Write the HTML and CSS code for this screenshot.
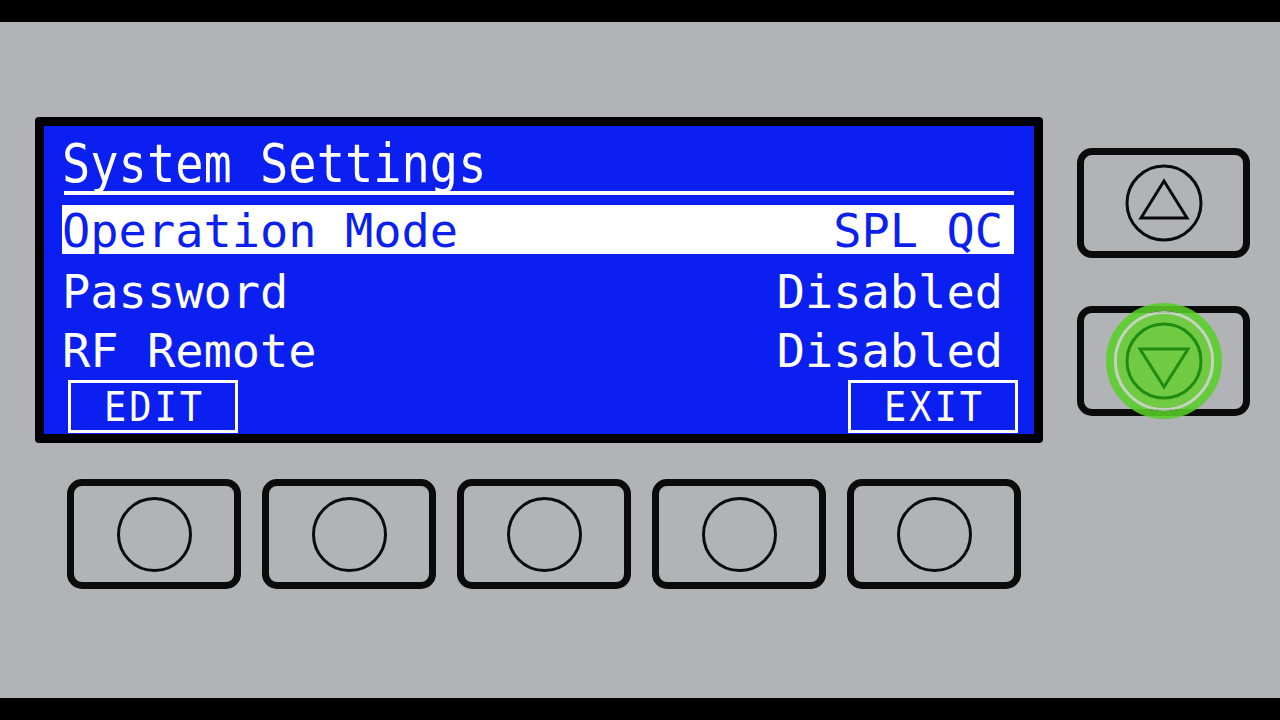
FILE: index.html
```html
<!DOCTYPE html>
<html lang="en">
<head>
  <meta charset="UTF-8">
  <meta name="viewport" content="width=device-width, initial-scale=1.0">
  <title>System Settings</title>
  <link rel="stylesheet" href="styles.css">
</head>
<body>
  <div class="panel">
    <div class="main">
      <div class="screen">
        <div class="title"><span class="lcd tall">System Settings</span></div>
        <div class="rule"></div>
        <div class="row selected">
          <span class="lcd">Operation Mode</span>
          <span class="lcd">SPL QC</span>
        </div>
        <div class="row">
          <span class="lcd">Password</span>
          <span class="lcd">Disabled</span>
        </div>
        <div class="row">
          <span class="lcd">RF Remote</span>
          <span class="lcd">Disabled</span>
        </div>
        <div class="softkeys">
          <div class="softkey"><span class="lcd tall">EDIT</span></div>
          <div class="softkey"><span class="lcd tall">EXIT</span></div>
        </div>
      </div>

      <div class="keys">
        <div class="key"><span class="dot"></span></div>
        <div class="key"><span class="dot"></span></div>
        <div class="key"><span class="dot"></span></div>
        <div class="key"><span class="dot"></span></div>
        <div class="key"><span class="dot"></span></div>
      </div>
    </div>

    <div class="nav">
      <div class="key">
        <svg class="arrow" width="80" height="80" viewBox="-40 -40 80 80">
          <circle r="37" fill="none" stroke="#0b0b0b" stroke-width="3"/>
          <polygon points="0,-22 23,15 -23,15" fill="none" stroke="#0b0b0b" stroke-width="3"/>
        </svg>
      </div>
      <div class="key">
        <!-- pressed state glow -->
        <svg class="arrow" width="124" height="124" viewBox="-62 -62 124 124">
          <g opacity="0.86">
            <circle r="54" fill="none" stroke="#58d126" stroke-width="8"/>
            <circle r="48.5" fill="none" stroke="#c4dcbc" stroke-width="3"/>
            <circle r="47" fill="#66cf30"/>
          </g>
          <circle r="37" fill="none" stroke="#1e8b13" stroke-width="3"/>
          <polygon points="0,26 24,-12 -24,-12" fill="none" stroke="#1e8b13" stroke-width="3"/>
        </svg>
      </div>
    </div>
  </div>
</body>
</html>
```

FILE: styles.css
```css
body {
  margin: 0;
  padding: 0;
  background-color: #000;
  font-family: "DejaVu Sans Mono", "Liberation Mono", monospace;
}

.panel {
  margin-top: 22px;
  height: 676px;
  background-color: #b2b3b6;
  display: flex;
}

.main {
  padding: 95px 0 0 35px;
}

/* LCD */

.screen {
  width: 1008px;
  height: 326px;
  box-sizing: border-box;
  background-color: #0a1ff0;
  border: 9px solid #000;
  border-radius: 4px;
  padding: 10px 20px 2px 18px;
  color: #fff;
}

.lcd {
  display: inline-block;
  white-space: pre;
}

.lcd.tall {
  transform: scaleY(1.12);
}

.title {
  height: 55px;
  line-height: 55px;
  font-size: 47px;
}

.rule {
  height: 4px;
  margin-left: 2px;
  background-color: #fff;
}

.row {
  display: flex;
  justify-content: space-between;
  height: 59px;
  line-height: 59px;
  font-size: 47px;
  padding-right: 11px;
}

.row.selected {
  height: 49px;
  line-height: 51px;
  margin: 10px 0 8px;
  background-color: #fff;
  color: #0a1ff0;
}

.softkeys {
  display: flex;
  justify-content: space-between;
  margin: 0 -4px 0 6px;
}

.softkey {
  width: 170px;
  height: 53px;
  box-sizing: border-box;
  border: 3px solid #fff;
  padding: 2px 0 0 3px;
  line-height: 45px;
  font-size: 37px;
  letter-spacing: 3px;
  text-align: center;
}

/* hardware keys */

.keys {
  display: flex;
  gap: 21px;
  margin: 36px 0 0 32px;
}

.key {
  width: 174px;
  height: 110px;
  box-sizing: border-box;
  border: 7px solid #0b0b0b;
  border-radius: 15px;
  display: flex;
  align-items: center;
  justify-content: center;
}

.dot {
  width: 75px;
  height: 75px;
  box-sizing: border-box;
  border: 3px solid #0b0b0b;
  border-radius: 50%;
}

.nav {
  display: flex;
  flex-direction: column;
  gap: 48px;
  padding: 126px 0 0 34px;
}

.nav .key {
  width: 173px;
}

.arrow {
  flex: none;
  overflow: visible;
}
```
